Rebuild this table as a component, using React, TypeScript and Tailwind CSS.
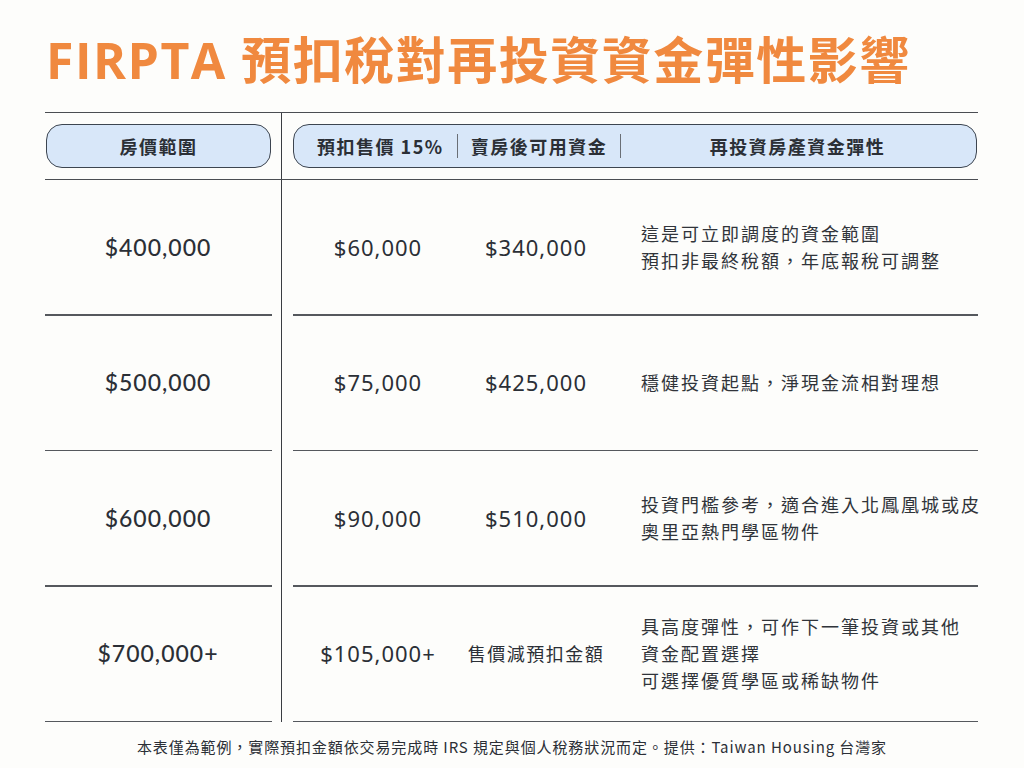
import React from "react";

const CJK = '"Noto Sans CJK TC", "Noto Sans CJK SC", sans-serif';
const NUM_LEFT = `Lato, ${CJK}`;
const NUM_MID = `"Noto Sans", ${CJK}`;

type Row = { price: string; hold: string; avail: string; desc: string[]; availCjk?: boolean };

const rows: Row[] = [
  { price: "$400,000", hold: "$60,000", avail: "$340,000", desc: ["這是可立即調度的資金範圍", "預扣非最終稅額，年底報稅可調整"] },
  { price: "$500,000", hold: "$75,000", avail: "$425,000", desc: ["穩健投資起點，淨現金流相對理想"] },
  { price: "$600,000", hold: "$90,000", avail: "$510,000", desc: ["投資門檻參考，適合進入北鳳凰城或皮", "奧里亞熱門學區物件"] },
  { price: "$700,000+", hold: "$105,000+", avail: "售價減預扣金額", availCjk: true, desc: ["具高度彈性，可作下一筆投資或其他", "資金配置選擇", "可選擇優質學區或稀缺物件"] },
];

export default function App() {
  return (
    <div className="w-[1024px] h-[768px] bg-[#fdfdfb] text-[#2b2f36] overflow-hidden" style={{ fontFamily: CJK }}>
      <div className="pt-[30px] pl-[46px] h-[112px]">
        <h1
          className="text-[50px] leading-[60px] font-bold text-[#f0893f] tracking-[1.5px]"
          style={{ fontFamily: `"Open Sans", ${CJK}` }}
        >
          FIRPTA 預扣稅對再投資資金彈性影響
        </h1>
      </div>

      <div className="ml-[45px] w-[933px]">
        {/* header */}
        <div className="grid grid-cols-[237px_696px] border-t-[1.5px] border-b-[1.5px] border-[#4a4d52]">
          <div className="border-r-[1.5px] border-[#3a3d42] py-[11px] pl-[1px]">
            <div className="w-[225px] h-[44px] rounded-[16px] border border-[#3d4550] bg-[#d8e7f9] flex items-center justify-center text-[18px] font-bold tracking-[1.5px]">
              房價範圍
            </div>
          </div>
          <div className="py-[11px] pl-[11px]">
            <div className="w-[684px] h-[44px] rounded-[16px] border border-[#3d4550] bg-[#d8e7f9] flex items-center pl-[23px] text-[18px] font-bold tracking-[1.5px]">
              <span>預扣售價 15%</span>
              <span className="mx-[13px] w-px h-[24px] bg-[#6a6f76]" />
              <span>賣房後可用資金</span>
              <span className="ml-[13px] w-px h-[24px] bg-[#6a6f76]" />
              <span className="flex-1 text-center pr-[2px] tracking-[1.5px]">再投資房產資金彈性</span>
            </div>
          </div>
        </div>

        {rows.map((r, i) => (
          <div key={i} className="grid grid-cols-[237px_696px]">
            <div className="border-r-[1.5px] border-[#3a3d42] flex flex-col">
              <div
                className="h-[134px] w-[226px] flex items-center justify-center text-[23px] font-medium tracking-[1px]"
                style={{ fontFamily: NUM_LEFT }}
              >
                {r.price}
              </div>
              <div className="w-[227px] h-[1.5px] bg-[#55585d]" />
            </div>
            <div className="pl-[11px] flex flex-col">
              <div className="h-[134px] w-[684px] flex items-center">
                <div className="w-[170px] shrink-0 text-center text-[22px] font-normal tracking-[1px]" style={{ fontFamily: NUM_MID }}>
                  {r.hold}
                </div>
                <div
                  className={
                    r.availCjk
                      ? "w-[146px] shrink-0 text-center text-[18px] tracking-[1.5px]"
                      : "w-[146px] shrink-0 text-center text-[22px] font-normal tracking-[1px]"
                  }
                  style={{ fontFamily: r.availCjk ? CJK : NUM_MID }}
                >
                  {r.avail}
                </div>
                <div className="pl-[32px] text-[18px] leading-[27px] tracking-[2px] text-[#30343a] whitespace-nowrap">
                  {r.desc.map((d, j) => (
                    <div key={j}>{d}</div>
                  ))}
                </div>
              </div>
              <div className="w-[685px] h-[1.5px] bg-[#55585d]" />
            </div>
          </div>
        ))}
      </div>

      <div className="text-center text-[15px] mt-[14px] text-[#2b2f36] tracking-[0.9px]">
        本表僅為範例，實際預扣金額依交易完成時 IRS 規定與個人稅務狀況而定。提供：Taiwan Housing 台灣家
      </div>
    </div>
  );
}
